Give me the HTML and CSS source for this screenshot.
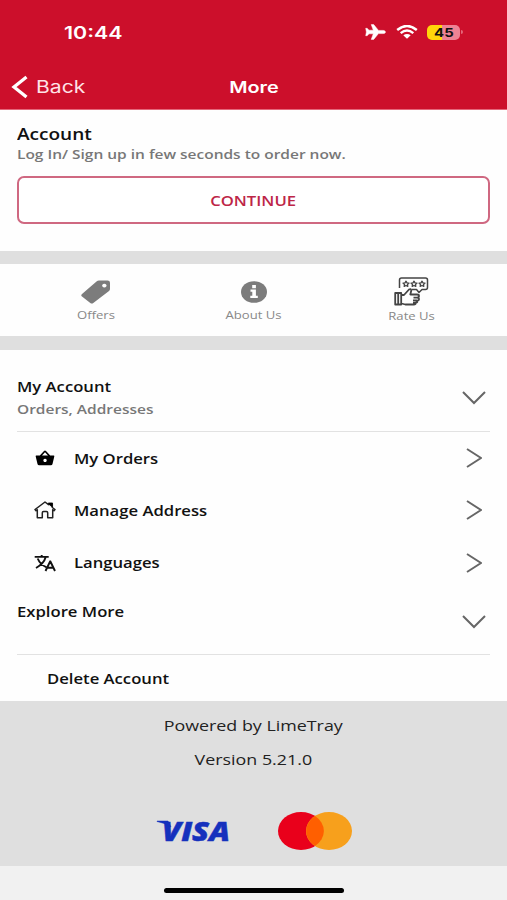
FILE: index.html
```html
<!DOCTYPE html>
<html lang="en">
<head>
<meta charset="utf-8">
<title>More</title>
<link rel="stylesheet" href="styles.css">
</head>
<body>
<header class="header">
  <div class="status">
    <span class="wide time">10:44</span>
    <div class="status-icons">
      <svg class="plane" viewBox="0 0 21 16"><path stroke="#fff" stroke-width=".5" d="M20.500 8c0-.9-1.200-1.600-2.400-1.600h-4.600L8.700.6H6.200l2.100 5.600H4L2.200 4.300H.7L1.400 8 .7 11.700h1.500L4 9.800h4.300l-2.100 5.600h2.500l4.800-5.800h4.600c1.200 0 2.400-.7 2.400-1.600z"/></svg>
      <svg class="wifi" viewBox="0 0 22 14"><path d="M1.200 4.900Q11-2.900 20.800 4.900M4.700 8.100Q11 3 17.300 8.100" fill="none" stroke="#fff" stroke-width="2.500"/><path d="M7.300 10.300Q11 7.600 14.700 10.300L11 13.700z"/></svg>
      <div class="battery"><span class="wide">45</span></div><i class="battery-tip"></i>
    </div>
  </div>
  <nav class="navbar">
    <a class="back"><svg viewBox="0 0 18 24"><path d="M15.500 2 3 12l12.500 10"/></svg><span class="wide">Back</span></a>
    <h1><span class="wide mid">More</span></h1>
    <span></span>
  </nav>
</header>
<main>
  <section class="account">
    <h2><span class="wide">Account</span></h2>
    <p><span class="wide">Log In/ Sign up in few seconds to order now.</span></p>
    <button class="continue"><span class="wide mid">CONTINUE</span></button>
  </section>
  <section class="links">
    <a class="link"><svg class="tag" viewBox="0 0 30 24"><path fill-rule="evenodd" d="M18 .5h8.500q2.500 0 2.500 2.300V9q0 1.200-1 2L12.300 23q-1.500 1.200-3 0L1 16.600q-1.500-1.300 0-2.600L15.500 1.600Q16.600.5 18 .5zM23.300 3.700a2.200 1.900 0 1 0 .1 0z"/></svg><span class="wide mid">Offers</span></a>
    <a class="link"><svg class="info" viewBox="0 0 26 22"><ellipse cx="13" cy="11" rx="13" ry="10.800"/><path fill="#fff" d="M11.200 4h3.700v3.200h-3.700zM9.500 8.600h5.400v6.200h1.900v2.300H9.300v-2.300h2v-4H9.500z"/></svg><span class="wide mid">About Us</span></a>
    <a class="link rate"><svg class="rating" viewBox="0 0 35 29"><g fill="none" stroke="#444" stroke-width="1.500" stroke-linejoin="round"><path d="M5.500 11V3q0-2 2-2h24q2 0 2 2v7.500q0 2-2 2H28l-3 3-2.500-3H18"/><path stroke-width="1.800" d="M1.200 16h6v11.500h-6zM4.200 16v11.500M7.500 18h2.500l5-5.500q2-1.300 2.300 1l-1 4H23q2 0 2 1.500t-2 1.700q2 0 2 1.500T23 23.500q1.200 2-1.200 2.200 0 1.800-2 1.800h-8.500L7.500 26.500M19.500 20.700H23m-4 2.800h4m-4 2.300h3"/></g><g fill="none" stroke="#444" stroke-width="1.300" stroke-linejoin="round"><path d="m12 4.200 1 1.600 2 .3-1.500 1.400.3 1.900-1.800-.9-1.800.9.300-1.900L9 6.100l2-.3zM20 4.200l1 1.600 2 .3-1.500 1.400.3 1.900-1.800-.9-1.800.9.300-1.900L17 6.100l2-.3zM28 4.200l1 1.600 2 .3-1.500 1.400.3 1.900-1.800-.9-1.800.9.300-1.900L25 6.100l2-.3z"/></g></svg><span class="wide mid">Rate Us</span></a>
  </section>
  <section class="menu">
    <div class="group">
      <div><h3><span class="wide">My Account</span></h3><p><span class="wide">Orders, Addresses</span></p></div>
      <svg class="down" viewBox="0 0 24 14"><path d="m1 1 11 11L23 1"/></svg>
    </div>
    <a class="row"><svg class="icon" viewBox="0 0 22 20"><path fill-rule="evenodd" d="M2.300 7.500h3.500L10 2.900q1-.9 2 0l4.200 4.600h3.500q.8 0 .6 1L18.500 16q-.3 1.300-1.600 1.300H5.100Q3.800 17.300 3.500 16L1.700 8.500q-.2-1 .6-1zm5.700 0h6L11 4.300zm3 3.200a1.700 1.700 0 1 0 .1 0z"/></svg><span class="wide">My Orders</span><svg class="next" viewBox="0 0 16 20"><path d="m1 1 14 9-14 9"/></svg></a>
    <a class="row"><svg class="icon" viewBox="0 0 22 20"><path fill="none" stroke="#222" stroke-width="1.500" stroke-linejoin="round" d="M1 9.500 11 2l3.500 2.600V3.500h3.800v4l2.700 2-1 1.200-1.300-.9v8h-5v-5q0-1.200-1.200-1.200h-3q-1.200 0-1.200 1.200v5h-5v-8l-1.300.9z"/><path d="M14.500 2.800h4v4.600l-4-2.800z"/></svg><span class="wide">Manage Address</span><svg class="next" viewBox="0 0 16 20"><path d="m1 1 14 9-14 9"/></svg></a>
    <a class="row"><svg class="icon" viewBox="0 0 22 20"><path fill="none" stroke="#111" stroke-width="1.900" d="M.7 3.900h14M7.700 2v2M3.700 5.500q2.300 5.700 8.500 8.700M11.700 4q-1.700 6.500-9.700 11M11.500 18l4.600-9.500h.3L21 18M13 14.800h6.700"/></svg><span class="wide">Languages</span><svg class="next" viewBox="0 0 16 20"><path d="m1 1 14 9-14 9"/></svg></a>
    <div class="group explore"><h3><span class="wide">Explore More</span></h3><svg class="down" viewBox="0 0 24 14"><path d="m1 1 11 11L23 1"/></svg></div>
    <a class="delete"><span class="wide">Delete Account</span></a>
  </section>
</main>
<footer class="footer">
  <p><span class="wide mid">Powered by LimeTray</span></p>
  <p><span class="wide mid">Version 5.21.0</span></p>
  <div class="cards">
    <svg class="visa" viewBox="0 0 76 36"><text x="6" y="27.500" textLength="68" lengthAdjust="spacingAndGlyphs">VISA</text><path d="M1 8h11l3 6Q8 9.500 1 8.500z"/></svg>
    <svg class="mastercard" viewBox="0 0 74 38"><ellipse cx="23" cy="19" rx="23" ry="19" fill="#e9001b"/><ellipse cx="51" cy="19" rx="23" ry="19" fill="#f7a01c"/><path fill="#ff5f00" d="M37 4a23 19 0 0 1 0 30 23 19 0 0 1 0-30z"/></svg>
  </div>
</footer>
<div class="home"><i></i></div>
</body>
</html>
```
FILE: styles.css
```css
* { box-sizing: border-box; }
body { margin: 0; width: 507px; height: 900px; overflow: hidden; background: #fefefe; color: #111; font-family: "Open Sans", sans-serif; }
h1, h2, h3, p { margin: 0; }
svg { display: block; flex: none; }
.wide { display: inline-block; white-space: nowrap; transform: scaleX(1.19); transform-origin: left center; }
.mid { transform-origin: center; }

.header { height: 110px; background: #cc0f2b; border-bottom: 1px solid #e4677a; color: #fff; font-family: Inter, sans-serif; }
.header .wide { transform: scaleX(1.24); }
.status { display: flex; justify-content: space-between; align-items: center; height: 64px; padding: 0 44px 0 64px; }
.time { font-size: 17.300px; font-weight: 600; }
.status-icons { display: flex; align-items: center; fill: #fff; }
.plane { width: 21px; height: 16px; margin-right: 10px; }
.wifi { width: 22px; height: 14px; margin-right: 9px; }
.battery { display: flex; justify-content: center; width: 33px; height: 15px; border-radius: 5px; background: linear-gradient(90deg, #ffd60a 46%, #ee8294 46%); color: #111; font-size: 12px; line-height: 15px; font-weight: 700; }
.battery .wide { transform-origin: center; }
.battery-tip { width: 2px; height: 4px; margin-left: 1px; border-radius: 0 2px 2px 0; background: #e4677a; }
.navbar { display: grid; grid-template-columns: 1fr auto 1fr; align-items: center; height: 45px; padding: 0 11px; }
.back { display: flex; align-items: center; gap: 7px; font-size: 17px; color: #ffe3e7; }
.back svg { width: 18px; height: 24px; fill: none; stroke: #fff; stroke-width: 3.300; }
.navbar h1 { font-size: 16px; line-height: 20px; font-weight: 600; }

.account { height: 141px; padding: 14px 17px 0; }
.account h2 { font-size: 16px; line-height: 21px; font-weight: 600; }
.account p, .group p { font-size: 13px; line-height: 18px; font-weight: 600; color: #777; }
.continue { display: block; width: 100%; height: 48px; margin-top: 13px; padding: 0; border: 2px solid #cf6881; border-radius: 7px; background: #fff; color: #bd2647; font: 600 14px "Open Sans", sans-serif; }
.links { display: flex; justify-content: space-between; height: 99px; border-top: 13px solid #dfdfdf; border-bottom: 14px solid #dfdfdf; padding: 0 17px; }
.link { display: flex; flex-direction: column; align-items: center; justify-content: flex-end; width: 158px; padding-bottom: 14px; font-size: 11px; line-height: 15px; color: #888; fill: #7c7c7c; }
.link.rate { padding-bottom: 13px; }
.tag { width: 30px; height: 24px; margin-bottom: 3px; }
.info { width: 26px; height: 22px; margin-bottom: 4px; }
.rating { width: 35px; height: 29px; margin-bottom: 2px; }

.menu { height: 351px; padding: 0 17px; font-size: 14px; font-weight: 600; }
.group { display: flex; justify-content: space-between; height: 82px; padding-top: 26px; border-bottom: 1px solid #e2e2e2; }
.group h3 { font-size: 14px; line-height: 21px; font-weight: 600; }
.group p { padding-top: 3px; }
.down { width: 24px; height: 14px; margin: 15px 4px 0 0; }
.down, .next { fill: none; stroke: #666; stroke-width: 2; }
.row { display: flex; align-items: center; height: 52.300px; padding: 0 8px 0 17px; }
.icon { width: 22px; height: 20px; margin-right: 17.500px; }
.next { width: 16px; height: 20px; margin-left: auto; }
.explore { height: 66px; padding-top: 12px; }
.explore .down { margin-top: 14px; }
.delete { display: flex; align-items: center; height: 47px; padding-left: 29.500px; }

.footer { height: 165px; padding-top: 7px; background: #dfdfdf; color: #222; font-size: 15px; line-height: 34px; text-align: center; }
.cards { display: flex; justify-content: center; align-items: center; gap: 46px; height: 74px; padding-top: 36px; }
.visa { width: 76px; height: 36px; fill: #1531bd; stroke: #1531bd; stroke-width: .5; }
.visa text { font: italic 800 27px "Open Sans", sans-serif; }
.mastercard { width: 74px; height: 38px; }
.home { display: flex; justify-content: center; height: 34px; padding-top: 21.500px; background: #f1f1f1; }
.home i { width: 180px; height: 5px; border-radius: 3px; background: #000; }
```
